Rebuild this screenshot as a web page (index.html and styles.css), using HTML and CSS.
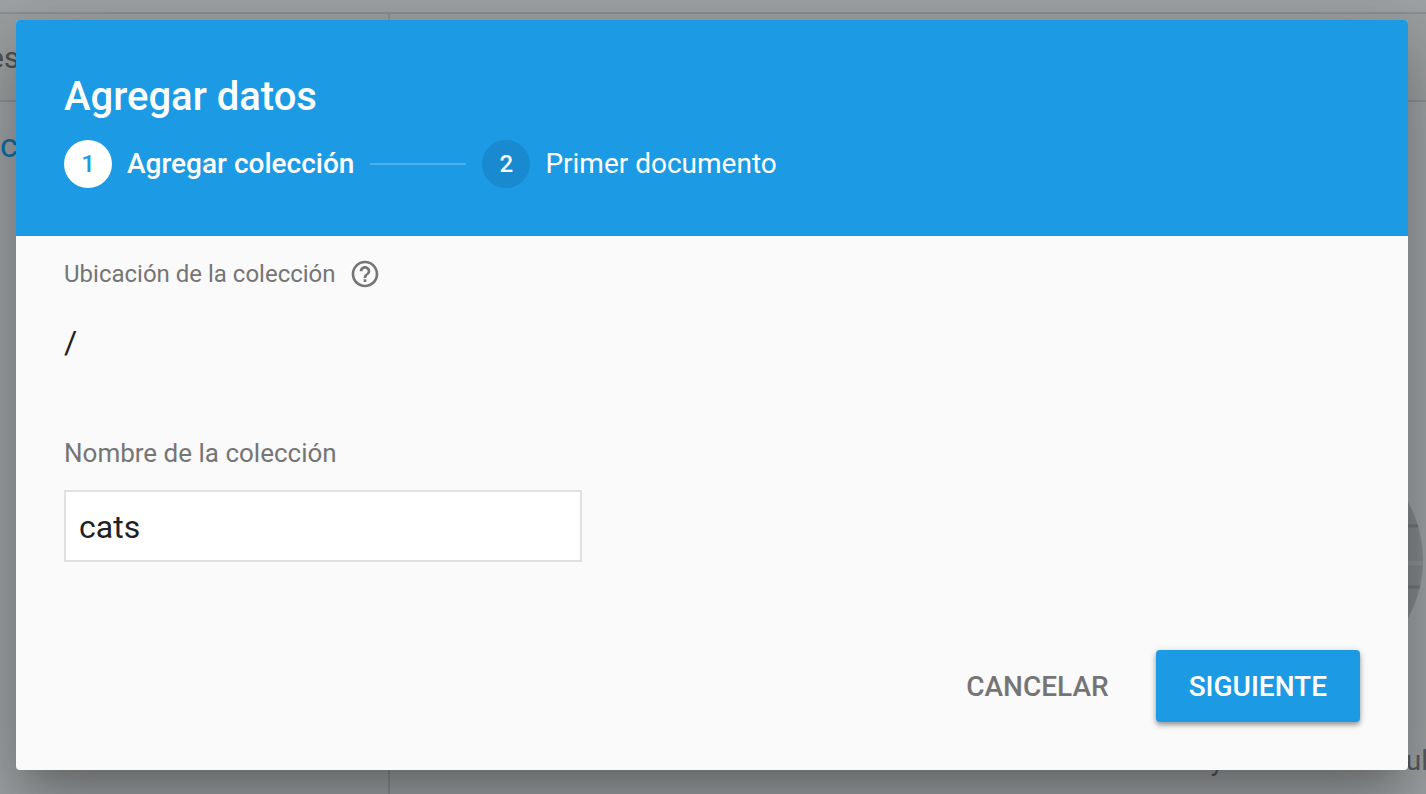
FILE: index.html
```html
<!DOCTYPE html>
<html lang="es">
<head>
<meta charset="utf-8">
<meta name="viewport" content="width=device-width, initial-scale=1">
<title>Agregar datos</title>
<link rel="stylesheet" href="styles.css">
</head>
<body>
<div class="backdrop" aria-hidden="true">
  <div class="backdrop-top"></div>
  <div class="backdrop-main">
    <div class="backdrop-side">
      <div class="backdrop-tab">es</div>
      <div class="backdrop-link">c</div>
    </div>
    <div class="backdrop-content">
      <div class="backdrop-tab"></div>
      <svg class="globe" viewBox="0 0 240 240">
        <circle cx="120" cy="120" r="120" fill="#85898b"/>
        <path d="M5 86H235M3 147H237" stroke="#727678" stroke-width="3"/>
        <path d="M0 123H240" stroke="#8e9294" stroke-width="4"/>
      </svg>
      <p class="backdrop-note"><span>y</span><span>ul</span></p>
    </div>
  </div>
</div>
<main class="overlay">
  <form class="dialog" role="dialog" aria-labelledby="dialog-title">
    <header class="dialog-header">
      <h1 class="dialog-title" id="dialog-title">Agregar datos</h1>
      <ol class="steps">
        <li class="step step-active" aria-current="step"><span class="step-number">1</span><span>Agregar colección</span></li>
        <li class="step-line" role="presentation"></li>
        <li class="step"><span class="step-number">2</span><span>Primer documento</span></li>
      </ol>
    </header>
    <div class="dialog-body">
      <div class="location-label">
        <span>Ubicación de la colección</span>
        <button class="help" type="button" aria-label="Ayuda">
          <svg class="help-icon" viewBox="0 0 24 24"><path fill="currentColor" d="M11 18h2v-2h-2v2zm1-16C6.480 2 2 6.480 2 12s4.480 10 10 10 10-4.480 10-10S17.520 2 12 2zm0 18c-4.410 0-8-3.590-8-8s3.590-8 8-8 8 3.590 8 8-3.590 8-8 8zm0-14c-2.210 0-4 1.790-4 4h2c0-1.100.9-2 2-2s2 .9 2 2c0 2-3 1.750-3 5h2c0-2.250 3-2.500 3-5 0-2.210-1.790-4-4-4z"/></svg>
        </button>
      </div>
      <p class="location">/</p>
      <label class="field-label" for="name">Nombre de la colección</label>
      <input class="field" id="name" type="text" value="cats" autocomplete="off" spellcheck="false">
    </div>
    <footer class="actions">
      <button class="button" type="button">CANCELAR</button>
      <button class="button button-primary" type="submit">SIGUIENTE</button>
    </footer>
  </form>
</main>
</body>
</html>
```
FILE: styles.css
```css
* { box-sizing: border-box; }
body {
  margin: 0;
  font-family: Roboto, "Liberation Sans", sans-serif;
  color: #212121;
  background: #9fa3a5;
}
button, input { font: inherit; }

.backdrop {
  position: absolute;
  inset: 0;
  display: flex;
  flex-direction: column;
  overflow: hidden;
}
.backdrop-top {
  height: 14px;
  border-bottom: 2px solid #8c9092;
}
.backdrop-main { flex: 1; display: flex; }
.backdrop-side {
  width: 390px;
  border-right: 2px solid #8c9092;
}
.backdrop-content { flex: 1; position: relative; }
.backdrop-tab {
  height: 88px;
  border-bottom: 2px solid #8c9092;
  background: #9c9fa0;
  font-size: 30px;
  line-height: 88px;
  color: #4e5153;
  text-indent: -12px;
}
.backdrop-link {
  font-size: 34px;
  line-height: 86px;
  color: #136fa5;
}
.globe {
  position: absolute;
  right: 3px;
  bottom: 114px;
  width: 240px;
}
.backdrop-note {
  position: absolute;
  right: 0;
  bottom: 17px;
  margin: 0 -2px 0 0;
  display: flex;
  gap: 182px;
  font-size: 28px;
  line-height: 32px;
  color: #595c5e;
}

.overlay {
  position: relative;
  display: flex;
  min-height: 100vh;
  padding: 20px 18px 24px 16px;
}
.dialog {
  flex: 1;
  display: flex;
  flex-direction: column;
  border-radius: 4px;
  overflow: hidden;
  background: #fafafa;
  box-shadow: 0 22px 30px -14px rgba(0, 0, 0, .2), 0 48px 76px 6px rgba(0, 0, 0, .14), 0 18px 92px 16px rgba(0, 0, 0, .12);
}
.dialog-header {
  padding: 53px 48px 48px;
  color: #fff;
  background: #1c9be4;
}
.dialog-title {
  margin: 0 0 19px;
  font-size: 40px;
  font-weight: 500;
  line-height: 48px;
}
.steps {
  display: flex;
  align-items: center;
  gap: 16px;
  margin: 0;
  padding: 0;
  list-style: none;
  font-size: 28px;
  line-height: 48px;
}
.step { display: flex; gap: 15px; }
.step-active { font-weight: 500; }
.step-number {
  width: 48px;
  height: 48px;
  border-radius: 50%;
  font-size: 24px;
  font-weight: 500;
  text-align: center;
  background: #198acf;
}
.step-active .step-number { color: #1c9be4; background: #fff; }
.step-line { width: 96px; height: 2px; background: #4cb0ea; }

.dialog-body { flex: 1; padding: 20px 48px; }
.location-label {
  display: flex;
  align-items: center;
  gap: 13px;
  font-size: 24px;
  line-height: 36px;
  color: #757575;
}
.help {
  display: flex;
  padding: 0;
  border: 0;
  color: #757575;
  background: none;
}
.help-icon { width: 32px; height: 32px; }
.location {
  margin: 30px 0 73px;
  font-size: 32px;
  line-height: 40px;
}
.field-label {
  display: block;
  margin-bottom: 19px;
  font-size: 26px;
  line-height: 36px;
  color: #757575;
}
.field {
  display: block;
  width: 518px;
  max-width: 100%;
  height: 72px;
  padding: 2px 13px 0;
  border: 2px solid #e0e0e0;
  font-size: 32px;
  color: #212121;
  background: #fff;
  outline: none;
}
.actions {
  display: flex;
  justify-content: flex-end;
  gap: 15px;
  padding: 0 48px 48px;
}
.button {
  height: 72px;
  padding: 0 32px;
  border: 0;
  border-radius: 4px;
  font-size: 28px;
  font-weight: 500;
  color: #757575;
  background: none;
}
.button-primary {
  padding: 0 33px;
  color: #fff;
  background: #1c9be4;
  box-shadow: 0 3px 5px rgba(0, 0, 0, .35), 0 1px 8px rgba(0, 0, 0, .1);
}
```
